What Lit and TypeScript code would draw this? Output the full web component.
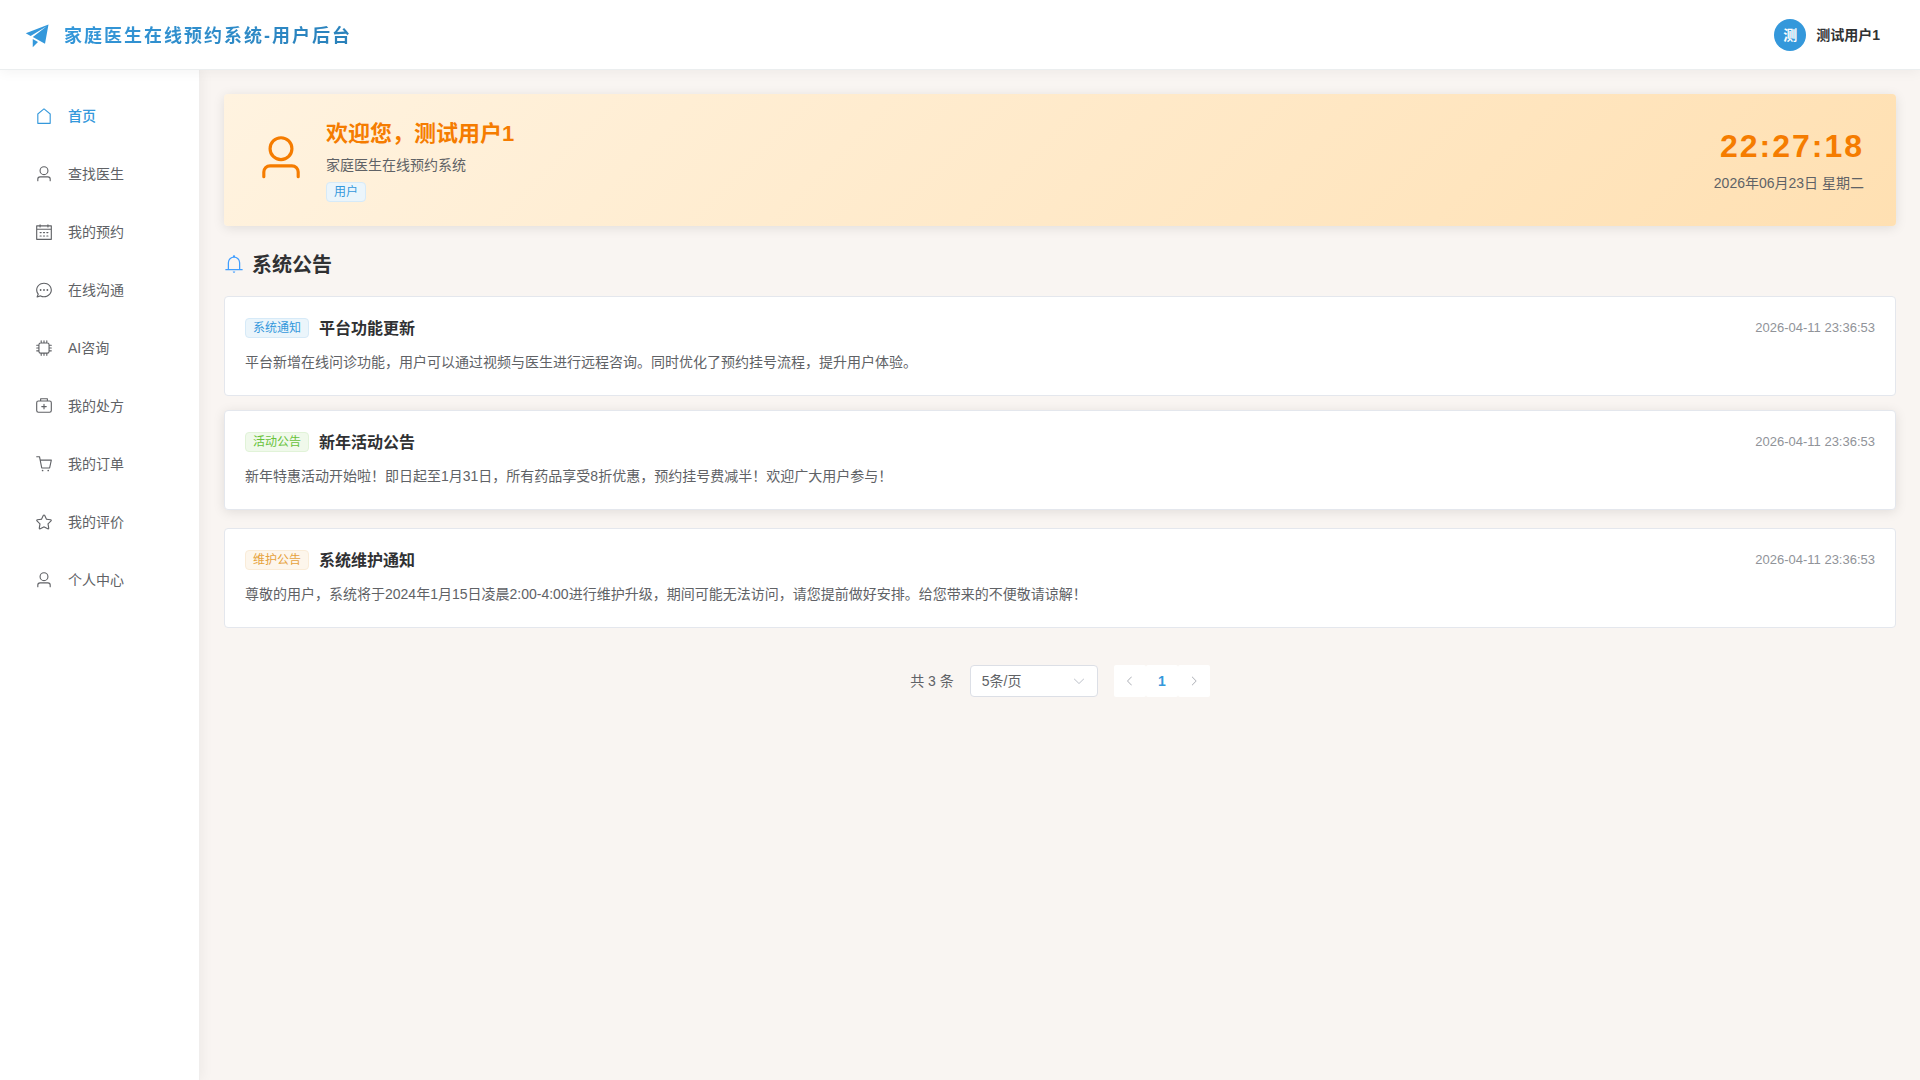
import { LitElement, html, css, svg } from "lit";
import { customElement, property, state } from "lit/decorators.js";
import { classMap } from "lit/directives/class-map.js";

const ICONS: Record<string, string> = {
  promotion:
    "m64 448 832-320-128 704-446.08-243.328L832 192 242.816 545.472zm256 512V657.024L512 768z",
  house:
    "M192 413.952V896h640V413.952L512 147.328zM139.52 374.4l352-293.312a32 32 0 0 1 40.96 0l352 293.312A32 32 0 0 1 896 398.976V928a32 32 0 0 1-32 32H160a32 32 0 0 1-32-32V398.976a32 32 0 0 1 11.52-24.576",
  user:
    "M512 512a192 192 0 1 0 0-384 192 192 0 0 0 0 384m0 64a256 256 0 1 1 0-512 256 256 0 0 1 0 512m320 320v-96a96 96 0 0 0-96-96H288a96 96 0 0 0-96 96v96a32 32 0 1 1-64 0v-96a160 160 0 0 1 160-160h448a160 160 0 0 1 160 160v96a32 32 0 1 1-64 0",
  calendar:
    "M128 384v512h768V192H768v32a32 32 0 1 1-64 0v-32H320v32a32 32 0 0 1-64 0v-32H128v128h768v64zm192-256h384V96a32 32 0 1 1 64 0v32h160a32 32 0 0 1 32 32v768a32 32 0 0 1-32 32H96a32 32 0 0 1-32-32V160a32 32 0 0 1 32-32h160V96a32 32 0 0 1 64 0zm-32 384h64a32 32 0 0 1 0 64h-64a32 32 0 0 1 0-64m0 192h64a32 32 0 1 1 0 64h-64a32 32 0 1 1 0-64m192-192h64a32 32 0 0 1 0 64h-64a32 32 0 0 1 0-64m0 192h64a32 32 0 1 1 0 64h-64a32 32 0 1 1 0-64m192-192h64a32 32 0 1 1 0 64h-64a32 32 0 1 1 0-64m0 192h64a32 32 0 1 1 0 64h-64a32 32 0 1 1 0-64",
  chat:
    "m174.72 855.68 135.296-45.12 23.68 11.84C388.096 849.536 448.576 864 512 864c211.84 0 384-166.784 384-352S723.84 160 512 160 128 326.784 128 512c0 69.12 24.96 139.264 70.848 199.232l22.08 28.8-46.272 115.584zm-45.248 82.56A32 32 0 0 1 89.6 896l58.368-145.92C94.72 680.32 64 596.864 64 512 64 299.904 256 96 512 96s448 203.904 448 416-192 416-448 416a461.06 461.06 0 0 1-206.912-48.384zM512 563.2a51.2 51.2 0 1 1 0-102.4 51.2 51.2 0 0 1 0 102.4m192 0a51.2 51.2 0 1 1 0-102.4 51.2 51.2 0 0 1 0 102.4m-384 0a51.2 51.2 0 1 1 0-102.4 51.2 51.2 0 0 1 0 102.4",
  cpu:
    "M320 256a64 64 0 0 0-64 64v384a64 64 0 0 0 64 64h384a64 64 0 0 0 64-64V320a64 64 0 0 0-64-64zm0-64h384a128 128 0 0 1 128 128v384a128 128 0 0 1-128 128H320a128 128 0 0 1-128-128V320a128 128 0 0 1 128-128M512 64a32 32 0 0 1 32 32v128h-64V96a32 32 0 0 1 32-32m160 0a32 32 0 0 1 32 32v128h-64V96a32 32 0 0 1 32-32m-320 0a32 32 0 0 1 32 32v128h-64V96a32 32 0 0 1 32-32m160 896a32 32 0 0 1-32-32V800h64v128a32 32 0 0 1-32 32m160 0a32 32 0 0 1-32-32V800h64v128a32 32 0 0 1-32 32m-320 0a32 32 0 0 1-32-32V800h64v128a32 32 0 0 1-32 32M64 512a32 32 0 0 1 32-32h128v64H96a32 32 0 0 1-32-32m0-160a32 32 0 0 1 32-32h128v64H96a32 32 0 0 1-32-32m0 320a32 32 0 0 1 32-32h128v64H96a32 32 0 0 1-32-32m896-160a32 32 0 0 1-32 32H800v-64h128a32 32 0 0 1 32 32m0-160a32 32 0 0 1-32 32H800v-64h128a32 32 0 0 1 32 32m0 320a32 32 0 0 1-32 32H800v-64h128a32 32 0 0 1 32 32",
  kit:
    "M192 256a64 64 0 0 0-64 64v448a64 64 0 0 0 64 64h640a64 64 0 0 0 64-64V320a64 64 0 0 0-64-64zm0-64h640a128 128 0 0 1 128 128v448a128 128 0 0 1-128 128H192A128 128 0 0 1 64 768V320a128 128 0 0 1 128-128M544 512h96a32 32 0 0 1 0 64h-96v96a32 32 0 0 1-64 0v-96h-96a32 32 0 0 1 0-64h96v-96a32 32 0 0 1 64 0zM352 128v64h320v-64zm-32-64h384a32 32 0 0 1 32 32v128a32 32 0 0 1-32 32H320a32 32 0 0 1-32-32V96a32 32 0 0 1 32-32",
  cart:
    "M432 928a48 48 0 1 1 0-96 48 48 0 0 1 0 96m320 0a48 48 0 1 1 0-96 48 48 0 0 1 0 96M96 128a32 32 0 0 1 0-64h160a32 32 0 0 1 31.36 25.728L320.64 256H928a32 32 0 0 1 31.296 38.72l-96 448A32 32 0 0 1 832 768H384a32 32 0 0 1-31.36-25.728L229.76 128zm314.24 576h395.904l82.304-384H333.44z",
  star:
    "m512 747.84 228.16 119.936a6.4 6.4 0 0 0 9.28-6.72l-43.52-254.08 184.512-179.904a6.4 6.4 0 0 0-3.52-10.88l-255.104-37.12L517.76 147.904a6.4 6.4 0 0 0-11.52 0L392.192 379.072l-255.104 37.12a6.4 6.4 0 0 0-3.52 10.88L318.08 606.976l-43.584 254.08a6.4 6.4 0 0 0 9.28 6.72zM313.6 924.48a70.4 70.4 0 0 1-102.144-74.24l37.888-220.928L88.96 472.96A70.4 70.4 0 0 1 128 352.896l221.76-32.256 99.2-200.96a70.4 70.4 0 0 1 126.208 0l99.2 200.96 221.824 32.256a70.4 70.4 0 0 1 39.04 120.064L774.72 629.376l37.888 220.928a70.4 70.4 0 0 1-102.144 74.24L512 820.096l-198.4 104.32z",
  bell:
    "M512 64a64 64 0 0 1 64 64v64H448v-64a64 64 0 0 1 64-64M256 768h512V448a256 256 0 1 0-512 0zm256-640a320 320 0 0 1 320 320v384H192V448a320 320 0 0 1 320-320M96 768h832q32 0 32 32t-32 32H96q-32 0-32-32t32-32m352 128h128a64 64 0 0 1-128 0",
  down:
    "M831.872 340.864 512 652.672 192.128 340.864a30.59 30.59 0 0 0-42.752 0 29.12 29.12 0 0 0 0 41.6L489.664 714.24a32 32 0 0 0 44.672 0l340.288-331.712a29.12 29.12 0 0 0 0-41.728 30.59 30.59 0 0 0-42.752 0z",
  left:
    "M609.408 149.376 277.76 489.6a32 32 0 0 0 0 44.672l331.648 340.352a29.12 29.12 0 0 0 41.728 0 30.59 30.59 0 0 0 0-42.752L339.264 511.936l311.872-319.872a30.59 30.59 0 0 0 0-42.688 29.12 29.12 0 0 0-41.728 0z",
  right:
    "M340.864 149.312a30.59 30.59 0 0 0 0 42.752L652.736 512 340.864 831.872a30.59 30.59 0 0 0 0 42.752 29.12 29.12 0 0 0 41.728 0L714.24 534.336a32 32 0 0 0 0-44.672L382.592 149.376a29.12 29.12 0 0 0-41.728 0z",
};

@customElement("ui-icon")
export class UiIcon extends LitElement {
  @property() name = "";

  static styles = css`
    :host {
      display: inline-flex;
      flex: none;
      width: 1em;
      height: 1em;
    }
    .glyph {
      width: 100%;
      height: 100%;
      fill: currentColor;
    }
  `;

  render() {
    return html`<svg class="glyph" viewBox="0 0 1024 1024" aria-hidden="true">
      ${svg`<path d=${ICONS[this.name] ?? ""}></path>`}
    </svg>`;
  }
}

interface Notice {
  kind: "primary" | "success" | "warning";
  tag: string;
  title: string;
  time: string;
  text: string;
}

const MENU = [
  { icon: "house", label: "首页" },
  { icon: "user", label: "查找医生" },
  { icon: "calendar", label: "我的预约" },
  { icon: "chat", label: "在线沟通" },
  { icon: "cpu", label: "AI咨询" },
  { icon: "kit", label: "我的处方" },
  { icon: "cart", label: "我的订单" },
  { icon: "star", label: "我的评价" },
  { icon: "user", label: "个人中心" },
];

const NOTICES: Notice[] = [
  {
    kind: "primary",
    tag: "系统通知",
    title: "平台功能更新",
    time: "2026-04-11 23:36:53",
    text: "平台新增在线问诊功能，用户可以通过视频与医生进行远程咨询。同时优化了预约挂号流程，提升用户体验。",
  },
  {
    kind: "success",
    tag: "活动公告",
    title: "新年活动公告",
    time: "2026-04-11 23:36:53",
    text: "新年特惠活动开始啦！即日起至1月31日，所有药品享受8折优惠，预约挂号费减半！欢迎广大用户参与！",
  },
  {
    kind: "warning",
    tag: "维护公告",
    title: "系统维护通知",
    time: "2026-04-11 23:36:53",
    text: "尊敬的用户，系统将于2024年1月15日凌晨2:00-4:00进行维护升级，期间可能无法访问，请您提前做好安排。给您带来的不便敬请谅解！",
  },
];

@customElement("app-root")
export class AppRoot extends LitElement {
  @state() private activeMenu = 0;
  @state() private raisedNotice = 1;

  static styles = css`
    :host {
      display: flex;
      flex-direction: column;
      min-height: 100vh;
      background: #f9f5f2;
      color: #303133;
      font-family: "Liberation Sans", "Noto Sans CJK SC", sans-serif;
      font-size: 14px;
      line-height: 20px;
    }
    * {
      box-sizing: border-box;
    }
    h1, h2, h3, p, ul {
      margin: 0;
      padding: 0;
    }

    .header {
      position: relative;
      z-index: 2;
      display: flex;
      align-items: center;
      justify-content: space-between;
      height: 70px;
      padding: 0 40px 0 24px;
      background: #fff;
      border-bottom: 1px solid #ebeeef;
      box-shadow: 0 2px 12px rgba(0, 0, 0, 0.05);
    }
    .brand {
      display: flex;
      align-items: center;
      gap: 12px;
    }
    .brand-icon {
      color: #3498db;
      font-size: 28px;
    }
    .brand-name {
      padding-top: 2px;
      font-size: 18px;
      font-weight: 700;
      line-height: 28px;
      letter-spacing: 2px;
      color: transparent;
      background: linear-gradient(135deg, #3498db, #2980b9);
      background-clip: text;
      -webkit-background-clip: text;
    }
    .account {
      display: flex;
      align-items: center;
      gap: 10px;
      padding: 0;
      border: 0;
      background: none;
      color: #303133;
      font: inherit;
      font-weight: 700;
      cursor: pointer;
    }
    .avatar {
      display: flex;
      align-items: center;
      justify-content: center;
      width: 32px;
      height: 32px;
      border-radius: 50%;
      background: #3498db;
      color: #fff;
    }

    .body {
      display: flex;
      flex: 1;
    }
    .sidebar {
      flex: none;
      width: 200px;
      padding: 21px 0;
      background: #fff;
      border-right: 1px solid #f0eeed;
      box-shadow: 2px 0 12px rgba(0, 0, 0, 0.05);
    }
    .menu {
      display: flex;
      flex-direction: column;
      gap: 8px;
      list-style: none;
    }
    .menu-link {
      display: flex;
      align-items: center;
      gap: 12px;
      height: 50px;
      padding: 0 32px;
      color: #606266;
      text-decoration: none;
    }
    .menu-link.active {
      color: #3498db;
      font-weight: 500;
    }
    .menu-icon {
      display: flex;
      justify-content: center;
      width: 24px;
      font-size: 18px;
    }

    .content {
      flex: 1;
      min-width: 0;
      padding: 24px;
    }
    .welcome {
      display: flex;
      align-items: center;
      justify-content: space-between;
      padding: 24px 32px;
      border-radius: 4px;
      background: linear-gradient(135deg, #fff3e0, #ffe0b2);
      box-shadow: 0 2px 12px rgba(0, 0, 0, 0.1);
    }
    .greeting {
      display: flex;
      align-items: center;
      gap: 20px;
    }
    .greeting-icon {
      margin-bottom: 4px;
      color: #f57c00;
      font-size: 50px;
    }
    .greeting-text {
      display: flex;
      flex-direction: column;
      align-items: flex-start;
    }
    .greeting-title {
      margin-bottom: 5px;
      color: #f57c00;
      font-size: 22px;
      line-height: 32px;
    }
    .greeting-sub {
      margin-bottom: 7px;
      color: #606266;
    }
    .clock {
      display: flex;
      flex-direction: column;
      align-items: flex-end;
      gap: 8px;
      color: #606266;
    }
    .clock-time {
      color: #f57c00;
      font-size: 32px;
      font-weight: 700;
      line-height: 38px;
      letter-spacing: 2px;
    }

    .tag {
      flex: none;
      height: 20px;
      padding: 0 7px;
      border: 1px solid #d6eaf8;
      border-radius: 4px;
      background: #ebf5fb;
      color: #3498db;
      font-size: 12px;
      line-height: 18px;
    }
    .tag.success {
      border-color: #e1f3d8;
      background: #f0f9eb;
      color: #67c23a;
    }
    .tag.warning {
      border-color: #faecd8;
      background: #fdf6ec;
      color: #e6a23c;
    }

    .section-title {
      display: flex;
      align-items: center;
      gap: 8px;
      margin: 24px 0 18px;
      font-size: 20px;
      line-height: 26px;
    }
    .section-label {
      padding-top: 2px;
    }
    .section-icon {
      color: #409eff;
    }
    .notices {
      display: flex;
      flex-direction: column;
      gap: 16px;
      list-style: none;
    }
    .notice {
      padding: 20px 20px 22px;
      border: 1px solid #e4e7ed;
      border-radius: 4px;
      background: #fff;
    }
    .notice.raised {
      box-shadow: 0 2px 12px rgba(0, 0, 0, 0.1);
      transform: translateY(-2px);
    }
    .notice-head {
      display: flex;
      align-items: center;
      gap: 10px;
      margin-bottom: 12px;
    }
    .notice-title {
      flex: 1;
      padding-top: 2px;
      font-size: 16px;
      line-height: 20px;
    }
    .notice-time {
      color: #909399;
      font-size: 13px;
    }
    .notice-text {
      color: #606266;
      line-height: 22px;
    }

    .pagination {
      display: flex;
      align-items: center;
      justify-content: center;
      gap: 16px;
      margin-top: 37px;
      color: #606266;
    }
    .size {
      position: relative;
      display: flex;
      width: 128px;
      height: 32px;
    }
    .size-select {
      width: 100%;
      padding: 0 11px;
      border: 1px solid #dcdfe6;
      border-radius: 4px;
      background: #fff;
      color: #606266;
      font: inherit;
      appearance: none;
    }
    .size-arrow {
      position: absolute;
      top: 9px;
      right: 12px;
      color: #c0c4cc;
      pointer-events: none;
    }
    .pager {
      display: flex;
    }
    .page {
      display: flex;
      align-items: center;
      justify-content: center;
      width: 32px;
      height: 32px;
      padding: 0;
      border: 0;
      border-radius: 2px;
      background: #fff;
      color: #3498db;
      font: inherit;
      font-weight: 700;
    }
    .page:disabled {
      color: #a8abb2;
      font-size: 12px;
    }
  `;

  private renderNotice(notice: Notice, index: number) {
    return html`<li
      class=${classMap({ notice: true, raised: index === this.raisedNotice })}
      @mouseenter=${() => (this.raisedNotice = index)}
    >
      <div class="notice-head">
        <span class="tag ${notice.kind}">${notice.tag}</span>
        <h3 class="notice-title">${notice.title}</h3>
        <time class="notice-time">${notice.time}</time>
      </div>
      <p class="notice-text">${notice.text}</p>
    </li>`;
  }

  render() {
    return html`
      <header class="header">
        <div class="brand">
          <ui-icon class="brand-icon" name="promotion"></ui-icon>
          <h1 class="brand-name">家庭医生在线预约系统-用户后台</h1>
        </div>
        <button class="account" type="button">
          <span class="avatar">测</span>
          <span>测试用户1</span>
        </button>
      </header>
      <div class="body">
        <nav class="sidebar">
          <ul class="menu">
            ${MENU.map(
              (item, i) => html`<li>
                <a
                  class=${classMap({ "menu-link": true, active: i === this.activeMenu })}
                  href="#"
                  @click=${(e: Event) => {
                    e.preventDefault();
                    this.activeMenu = i;
                  }}
                >
                  <span class="menu-icon"><ui-icon name=${item.icon}></ui-icon></span>
                  <span>${item.label}</span>
                </a>
              </li>`
            )}
          </ul>
        </nav>
        <main class="content">
          <section class="welcome">
            <div class="greeting">
              <ui-icon class="greeting-icon" name="user"></ui-icon>
              <div class="greeting-text">
                <h2 class="greeting-title">欢迎您，测试用户1</h2>
                <p class="greeting-sub">家庭医生在线预约系统</p>
                <span class="tag">用户</span>
              </div>
            </div>
            <div class="clock">
              <time class="clock-time">22:27:18</time>
              <span>2026年06月23日 星期二</span>
            </div>
          </section>
          <h2 class="section-title">
            <ui-icon class="section-icon" name="bell"></ui-icon>
            <span class="section-label">系统公告</span>
          </h2>
          <ul class="notices">
            ${NOTICES.map((n, i) => this.renderNotice(n, i))}
          </ul>
          <div class="pagination">
            <span>共 3 条</span>
            <div class="size">
              <select class="size-select" aria-label="每页条数">
                <option>5条/页</option>
                <option>10条/页</option>
                <option>20条/页</option>
              </select>
              <ui-icon class="size-arrow" name="down"></ui-icon>
            </div>
            <div class="pager">
              <button class="page" type="button" aria-label="上一页" disabled>
                <ui-icon name="left"></ui-icon>
              </button>
              <button class="page" type="button" aria-current="page">1</button>
              <button class="page" type="button" aria-label="下一页" disabled>
                <ui-icon name="right"></ui-icon>
              </button>
            </div>
          </div>
        </main>
      </div>
    `;
  }
}
